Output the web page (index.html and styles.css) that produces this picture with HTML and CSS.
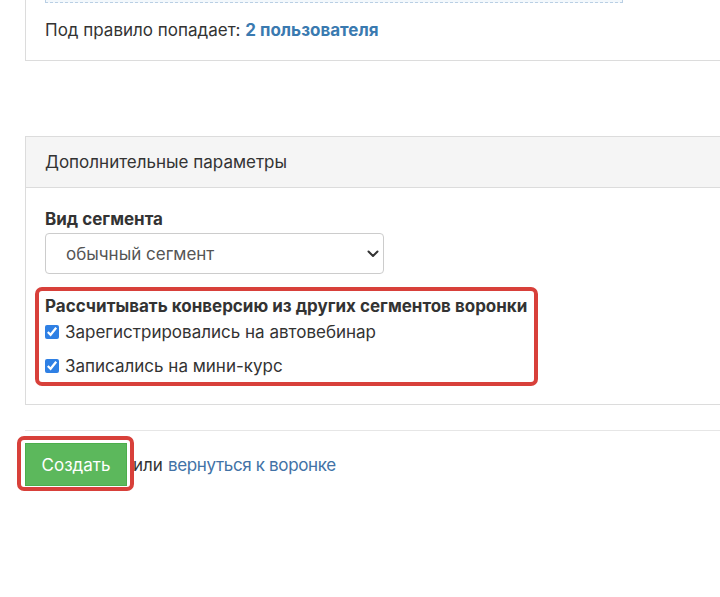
FILE: index.html
```html
<!DOCTYPE html>
<html lang="ru">
<head>
<meta charset="utf-8">
<link rel="stylesheet" href="styles.css">
</head>
<body>
<div class="page">
  <div class="panel panel-top">
    <div class="rule-box"></div>
    <div class="rule-count">Под правило попадает: <a class="count-link" href="#">2 пользователя</a></div>
  </div>

  <div class="panel panel-extra">
    <div class="panel-heading">Дополнительные параметры</div>
    <div class="panel-body">
      <div class="field-label">Вид сегмента</div>
      <div class="select">
        <span>обычный сегмент</span>
        <svg class="chevron" width="12" height="8" viewBox="0 0 12 8"><path d="M1.5 1.5 L6 6 L10.5 1.5" fill="none" stroke="#333" stroke-width="2" stroke-linecap="round" stroke-linejoin="round"/></svg>
      </div>
      <div class="conv-group">
        <div class="conv-title">Рассчитывать конверсию из других сегментов воронки</div>
        <label class="check-row"><input type="checkbox" checked><span>Зарегистрировались на автовебинар</span></label>
        <label class="check-row"><input type="checkbox" checked><span>Записались на мини-курс</span></label>
      </div>
    </div>
  </div>

  <div class="divider"></div>

  <div class="actions">
    <span class="btn-wrap"><button class="btn-create">Создать</button></span>
    <span class="or">или</span>
    <a class="back-link" href="#">вернуться к воронке</a>
  </div>
</div>
</body>
</html>
```

FILE: styles.css
```css
html {
  overflow: hidden;
  background: #fff;
}
body {
  margin: 0;
  padding: 0;
  font-family: "Inter", "Noto Sans", sans-serif;
  font-size: 17px;
  line-height: 22px;
  color: #333;
}
.page {
  margin-top: -40px;
  padding-left: 25px;
  padding-bottom: 40px;
  width: 900px;
}
.panel {
  border: 1px solid #dcdcdc;
  background: #fff;
}
.panel-top {
  padding: 0 19px 19px 19px;
}
.rule-box {
  height: 41px;
  width: 576px;
  background: #f3f8fc;
  border: 1px dashed #b9cfe4;
  border-top: none;
}
.rule-count {
  margin-top: 16px;
}
.count-link {
  color: #3a7ab0;
  font-weight: 700;
  text-decoration: none;
}
.panel-extra {
  margin-top: 75px;
}
.panel-heading {
  background: #f5f5f5;
  border-bottom: 1px solid #dcdcdc;
  padding: 14px 19px;
}
.panel-body {
  padding: 20px 19px 18px 19px;
}
.field-label {
  font-weight: 700;
}
.select {
  margin-top: 3px;
  height: 39px;
  width: 313px;
  border: 1px solid #ccc;
  border-radius: 4px;
  display: flex;
  align-items: center;
  justify-content: space-between;
  padding: 0 4px 0 20px;
  box-sizing: content-box;
  color: #555;
}
.chevron {
  display: block;
}
.conv-group {
  margin-top: 13px;
  margin-left: -10px;
  width: fit-content;
  border: 4px solid #d8403a;
  border-radius: 7px;
  padding: 4px 7px 5px 6px;
}
.conv-title {
  font-weight: 700;
}
.check-row {
  display: flex;
  align-items: center;
  gap: 6px;
  margin-top: 4px;
}
.check-row + .check-row {
  margin-top: 12px;
}
.check-row input {
  margin: 0;
  width: 14px;
  height: 14px;
  accent-color: #2f80e4;
}
.divider {
  margin-top: 25px;
  height: 1px;
  background: #e6e6e6;
}
.actions {
  margin-top: 12px;
  display: flex;
  align-items: center;
}
.btn-wrap {
  position: relative;
  display: inline-block;
}
.btn-wrap::after {
  content: "";
  position: absolute;
  left: -8px;
  right: -7px;
  top: -7px;
  bottom: -5px;
  border: 4px solid #d8403a;
  border-radius: 7px;
  pointer-events: none;
}
.btn-create {
  display: block;
  width: 102px;
  height: 43px;
  border: 1px solid #4cae4c;
  background: #5cb85c;
  color: #fff;
  font-family: inherit;
  font-size: 17px;
  padding: 0;
}
.or {
  margin-left: 6px;
}
.back-link {
  margin-left: 5px;
  color: #4272a6;
  text-decoration: none;
  letter-spacing: -0.35px;
}
```
